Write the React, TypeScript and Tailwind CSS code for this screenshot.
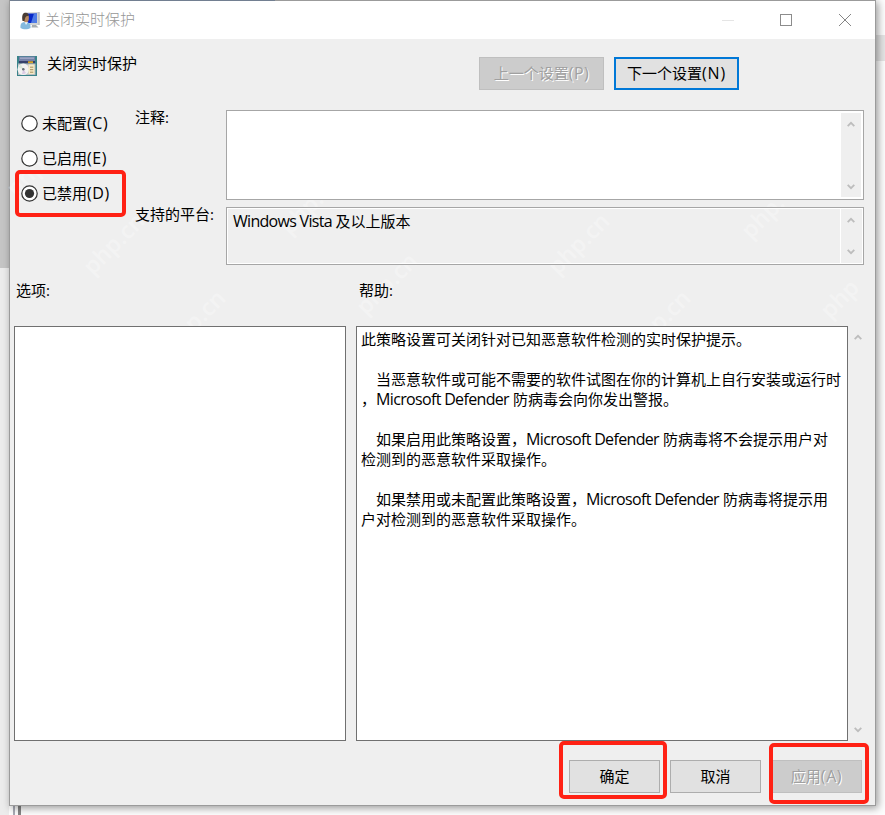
import React from 'react';

const helpLines = [
  ['此策略设置可关闭针对已知恶意软件检测的实时保护提示。'],
  [],
  ['\u3000当恶意软件或可能不需要的软件试图在你的计算机上自行安装或运行时'],
  ['，', 'Microsoft Defender', '防病毒会向你发出警报。'],
  [],
  ['\u3000如果启用此策略设置，', 'Microsoft Defender', '防病毒将不会提示用户对'],
  ['检测到的恶意软件采取操作。'],
  [],
  ['\u3000如果禁用或未配置此策略设置，', 'Microsoft Defender', '防病毒将提示用'],
  ['户对检测到的恶意软件采取操作。'],
];

const watermarks = [
  { x: 113, y: 243, text: 'php.cn' },
  { x: 194, y: 320, text: 'php.cn' },
  { x: 301, y: 212, text: 'php.' },
  { x: 386, y: 283, text: 'php.cn' },
  { x: 578, y: 243, text: 'php.cn' },
  { x: 659, y: 320, text: 'php.cn' },
  { x: 762, y: 216, text: 'php.' },
  { x: 839, y: 298, text: 'php' },
  { x: 25, y: 176, text: 'php' },
];

const Chevron: React.FC<{ down?: boolean }> = ({ down }) => (
  <svg width="8" height="6" viewBox="0 0 8 6" fill="none" stroke="#bdbdbd" strokeWidth="1.8">
    <path d={down ? 'M0.7 0.8L4 4.2L7.3 0.8' : 'M0.7 5.2L4 1.8L7.3 5.2'} />
  </svg>
);

const UserIcon: React.FC = () => (
  <svg width="20" height="19" viewBox="0 0 20 19">
    <path d="M5.5 1.5L19.5 1V14L7 14z" fill="#d0d3d4" />
    <path d="M7 2.5H17V12H7z" fill="#0828c8" />
    <path d="M14 2.5H17V12H11z" fill="#4e7be6" />
    <path d="M18.5 1H19.5V14H18.5z" fill="#aeb4b8" />
    <path d="M12 14h4l2.5 2.5h-7z" fill="#a7adb0" />
    <path d="M0.5 17C0 12.5 2 11 5.5 11S11 13 10.5 17C8 18.7 3 18.7 0.5 17z" fill="#83b9de" />
    <path d="M4.5 11l1.5 3 2-3z" fill="#e8f4fa" />
    <ellipse cx="6" cy="7" rx="2.9" ry="4.2" fill="#b98a61" />
    <path d="M2.5 10C1.5 4 3 1.5 6 1.8c2.5 0.2 3 2 2.5 3.2C6 4.5 5 6 4.5 10z" fill="#4a3c33" />
  </svg>
);

const PolicyIcon: React.FC = () => (
  <svg width="20" height="20" viewBox="0 0 20 20">
    <rect width="20" height="20" fill="#39838a" />
    <rect x="2" y="0.5" width="16" height="4.5" fill="#7581a8" />
    <rect x="3" y="1.5" width="14" height="1.3" fill="#a4adc9" />
    <rect x="2" y="5" width="16" height="2.5" fill="#35406a" />
    <rect x="11" y="5.3" width="5" height="2" fill="#d8a526" />
    <rect x="1" y="7.5" width="17.5" height="11.5" fill="#b9bec2" />
    <circle cx="6.3" cy="13.3" r="5.8" fill="#f1f1f1" />
    <path d="M6.3 13L1.5 11.5A5 5 0 0 1 4 8.5z" fill="#d9e8d9" />
    <path d="M6.3 13L9 17A5 5 0 0 1 5 18z" fill="#dccbe4" />
    <circle cx="6.3" cy="13.3" r="1.3" fill="#66727a" />
    <path d="M11.5 8.5h6v9.5h-6z" fill="#f5eac5" />
    <path d="M13 11.2h3.3M13 13.7h3.3M13 16.2h3.3" stroke="#a58d62" />
  </svg>
);

const Radio: React.FC<{ label: string; accel: string; checked?: boolean }> = ({ label, accel, checked }) => (
  <label className="flex h-[35px] items-center">
    <svg width="17" height="17" viewBox="0 0 17 17">
      <circle cx="8.5" cy="8.5" r="7.7" fill="#fff" stroke="#333" strokeWidth="1.2" />
      {checked && <circle cx="8.5" cy="8.5" r="4.6" fill="#333" />}
    </svg>
    <span className="ml-1 h-[22px]">
      {label}
      <span className="text-[16px] tracking-[0.6px]">{accel}</span>
    </span>
  </label>
);

const ScrollBar: React.FC<{ className?: string }> = ({ className = '' }) => (
  <div className={`flex w-5 flex-col items-center justify-between ${className}`}>
    <Chevron />
    <Chevron down />
  </div>
);

const RedFrame: React.FC<{ className: string }> = ({ className }) => (
  <div className={`absolute rounded-[5px] border-4 border-[#ff2114] ${className}`} />
);

const button = 'flex items-center justify-center border-[1.5px] pb-[2px]';
const disabledButton = 'border-[#bfbfbf] bg-[#cccccc] text-[#a0a0a0] [text-shadow:1px_1px_0_#fff]';

const App: React.FC = () => {
  return (
    <div className="relative flex h-[815px] w-[885px] overflow-hidden bg-[#fdfdfd] font-['Open_Sans','Noto_Sans_CJK_SC',sans-serif] text-[15px] leading-5 whitespace-nowrap text-black">
      <div className="flex w-[9px] shrink-0 flex-col">
        <div className="h-[268px] bg-[#c5c5c5]" />
        <div className="flex-1 bg-[#ececec]" />
      </div>

      <div className="z-10 flex h-[806px] w-[867px] shrink-0 flex-col border border-[#9b9b9b] bg-[#efefef] shadow-[2px_2px_8px_rgba(0,0,0,0.4)]">
        {/* tiled watermark, painted under the controls */}
        <div className="pointer-events-none absolute inset-0">
          {watermarks.map((mark) => (
            <span
              key={`${mark.x}-${mark.y}`}
              className="absolute -translate-x-1/2 -translate-y-1/2 -rotate-45 text-[23px] font-semibold text-white/30"
              style={{ left: mark.x, top: mark.y }}
            >
              {mark.text}
            </span>
          ))}
        </div>

        <header className="relative flex h-[38px] shrink-0 items-center bg-white pl-[10px] text-[#969696]">
          <UserIcon />
          <span className="mb-[2px] ml-[5px] font-light">关闭实时保护</span>
          <div className="mr-6 ml-auto flex items-center">
            <span className="h-px w-3 bg-[#e5e5e5]" />
            <span className="ml-[46px] size-3 border border-[#8c8c8c]" />
            <svg className="ml-[47px]" width="12" height="12" viewBox="0 0 12 12" stroke="#858585">
              <path d="M0 0L12 12M12 0L0 12" />
            </svg>
          </div>
        </header>

        <div className="relative flex h-[71px] shrink-0 items-start pl-[7px]">
          <div className="mt-[17px]">
            <PolicyIcon />
          </div>
          <h1 className="mt-[14px] ml-[10px] w-[432px]">关闭实时保护</h1>
          <button className={`mt-[18px] h-[33px] w-[125px] ${button} ${disabledButton}`}>
            上一个设置<span className="text-[16px] tracking-[0.5px]">(P)</span>
          </button>
          <button className="mt-[18px] ml-[10px] flex h-[33px] w-[125px] items-center justify-center border-2 border-[#0078d7] bg-[#e1e1e1] pb-[2px]">
            下一个设置<span className="text-[16px] tracking-[0.8px]">(N)</span>
          </button>
        </div>

        <div className="relative flex h-[170px] shrink-0 pl-[11px]">
          <div className="-mt-1 w-[114px]">
            <Radio label="未配置" accel="(C)" />
            <Radio label="已启用" accel="(E)" />
            <Radio label="已禁用" accel="(D)" checked />
          </div>
          <div className="w-[91px]">
            <div className="mt-[-3px] h-[97px]">注释:</div>
            <div>支持的平台:</div>
          </div>
          <div className="w-[638px]">
            <div className="flex h-[90px] justify-end border border-[#a6a6a6] bg-white p-[2px]">
              <ScrollBar className="bg-[#efefef] pt-[8px] pb-[7px]" />
            </div>
            <div className="mt-[7px] flex h-[58px] justify-between border border-[#a6a6a6] p-px outline-1 -outline-offset-2 outline-white">
              <span className="mt-[2px] ml-[5px]">
                <span className="text-[16px] tracking-[-0.7px]">Windows Vista </span>
                及以上版本
              </span>
              <ScrollBar className="mr-[2px] border-l border-white py-[8px]" />
            </div>
          </div>
        </div>

        <div className="relative flex h-[46px] shrink-0 pl-[6px]">
          <span className="w-[343px]">选项:</span>
          <span>帮助:</span>
        </div>

        <div className="relative flex h-[415px] shrink-0 pl-1">
          <div className="w-[332px] border border-[#707070] bg-white" />
          <div className="ml-[10px] w-[492px] border border-[#707070] bg-white pt-[2px] pl-1">
            {helpLines.map((line, i) => (
              <p key={i} className="h-5">
                {line.map((part, j) =>
                  part.startsWith('Microsoft') ? (
                    <span key={j} className="mr-[4px] text-[16px] tracking-[-0.66px]">{part}</span>
                  ) : (
                    <span key={j}>{part}</span>
                  )
                )}
              </p>
            ))}
          </div>
          <ScrollBar className="pt-2 pb-2" />
        </div>

        <footer className="relative mt-[19px] flex gap-[10px] pl-[559px]">
          <button className={`h-[33px] w-[91px] ${button} border-[#adadad] bg-[#e1e1e1]`}>确定</button>
          <button className={`h-[33px] w-[91px] ${button} border-[#adadad] bg-[#e1e1e1]`}>取消</button>
          <button className={`h-[33px] w-[91px] ${button} ${disabledButton}`}>
            应用<span className="text-[16px] tracking-[0.6px]">(A)</span>
          </button>
        </footer>
      </div>

      <div className="flex flex-1 flex-col">
        <div className="mt-[35px] h-[26px] bg-[#e5e5e5]" />
      </div>

      {/* strip of the window behind */}
      <div className="absolute bottom-0 left-[13px] h-[10px] w-2 border-r-[3px] border-l-2 border-r-[#858585] border-l-[#a9abb5]" />
      <div className="absolute top-0 left-[10px] z-10 h-px w-[265px] bg-[#727f91]" />

      <div className="pointer-events-none absolute inset-0 z-20">
        <RedFrame className="top-[170px] left-[15px] h-[47px] w-[111px]" />
        <RedFrame className="top-[741px] left-[559px] h-[58px] w-[108px]" />
        <RedFrame className="top-[743px] left-[769px] h-[61px] w-[100px]" />
      </div>
    </div>
  );
};

export default App;
